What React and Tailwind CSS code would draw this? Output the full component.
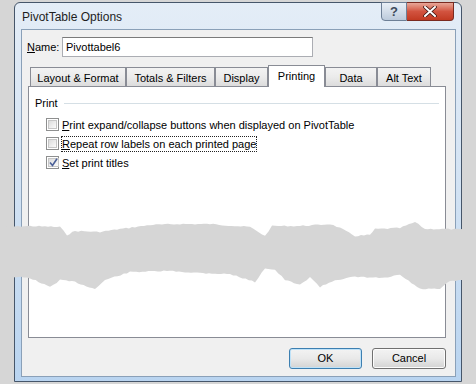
import React from "react";

// jagged "torn paper" band across the dialog
const topEdge = [
  [0, 227], [30, 226], [60, 227], [67, 235], [75, 231], [100, 232], [120, 229],
  [150, 225], [180, 224], [210, 224], [250, 227], [265, 236], [272, 226],
  [300, 226], [330, 224], [340, 228], [355, 236], [370, 235], [375, 229],
  [400, 228], [415, 222], [425, 229], [445, 229], [476, 230],
];
const bottomEdge = [
  [0, 276], [30, 278], [50, 287], [60, 280], [75, 282], [95, 289], [105, 280],
  [130, 272], [170, 271], [200, 273], [230, 274], [255, 282], [265, 268],
  [275, 270], [285, 280], [300, 285], [310, 277], [320, 287], [335, 280],
  [355, 277], [385, 278], [400, 275], [420, 289], [440, 289], [450, 281], [476, 280],
];

const jag = (pts, seed) => {
  let s = seed;
  const rnd = () => {
    s = (s * 9301 + 49297) % 233280;
    return s / 233280;
  };
  const out = [];
  for (let i = 0; i < pts.length - 1; i++) {
    const [x1, y1] = pts[i];
    const [x2, y2] = pts[i + 1];
    const steps = Math.max(1, Math.round((x2 - x1) / 3));
    for (let k = 0; k < steps; k++) {
      const t = k / steps;
      out.push([x1 + (x2 - x1) * t, y1 + (y2 - y1) * t + (rnd() - 0.5) * 1.3]);
    }
  }
  out.push(pts[pts.length - 1]);
  return out;
};

const tornPath = () => {
  const top = jag(topEdge, 7).map(([x, y]) => [x, y - 218]);
  const bot = jag(bottomEdge, 13).map(([x, y]) => [x, y - 218]).reverse();
  const all = [...top, ...bot];
  return "M" + all.map(([x, y]) => `${x.toFixed(1)},${y.toFixed(1)}`).join(" L") + " Z";
};

const Checkbox = ({ checked }) => (
  <span className="w-[13px] h-[13px] border border-[#8e8f8f] bg-white p-px flex shrink-0">
    <span className="flex-1 border border-[#c6c6c6] bg-gradient-to-br from-[#dcdcdc] to-[#fbfbfb] flex items-center justify-center">
      {checked && (
        <svg width="9" height="9" viewBox="0 0 9 9">
          <path d="M1 4.5 L3.5 7.5 L8 0.8" fill="none" stroke="#4a5f97" strokeWidth="1.6" />
        </svg>
      )}
    </span>
  </span>
);

const Tab = ({ label, w, active }) =>
  active ? (
    <div
      className={`${w} h-[22px] -mb-px relative z-10 bg-white border border-b-0 border-[#898c95] flex justify-center pt-[3px] leading-[14px]`}
    >
      {label}
    </div>
  ) : (
    <div
      className={`${w} h-[19px] bg-gradient-to-b from-[#f3f3f3] via-[#ebebeb] to-[#dcdcdc] border border-b-0 border-[#898c95] flex justify-center pt-[3px] leading-[14px]`}
    >
      {label}
    </div>
  );

const App = () => {
  return (
    <div className="w-[476px] h-[384px] bg-[#d6d6d6] relative overflow-hidden font-['Liberation_Sans',Arial,sans-serif] text-[11px] text-black">
      <div className="ml-[14px] mt-[2px] w-[448px] h-[380px] relative border border-[#46566a] rounded-t-[6px] bg-gradient-to-b from-[#e4edf7] via-[#d2e2f3] to-[#b9d4f0] pl-[6px] pr-[5px] flex flex-col">
        {/* title bar */}
        <div className="h-[26px] flex items-center pl-[1px] pt-[1px] text-[12px] text-[#1e1e1e]">PivotTable Options</div>
        <div className="absolute top-[-1px] right-[7px] flex h-[19px]">
          <div className="w-[26px] h-full border border-[#6d7f96] rounded-bl-[4px] bg-gradient-to-b from-[#e9eff6] via-[#d3dde9] to-[#bccadb] flex items-center justify-center text-[13px] font-bold text-[#3e4a5a]">
            ?
          </div>
          <div className="w-[47px] h-full border border-l-0 border-[#7a2a20] rounded-br-[4px] bg-gradient-to-b from-[#e7a698] via-[#d2533f] to-[#c23a22] flex items-center justify-center">
            <svg width="14" height="11" viewBox="0 0 14 11">
              <path d="M2 1 L12 10 M12 1 L2 10" stroke="#3a1410" strokeWidth="3.6" strokeLinecap="round" />
              <path d="M2 1 L12 10 M12 1 L2 10" stroke="#ffffff" strokeWidth="2" strokeLinecap="round" />
            </svg>
          </div>
        </div>

        {/* client area */}
        <div className="h-[348px] border border-[#8aa0b8] bg-[#f0f0f0] flex flex-col">
          <div className="flex items-center mt-[7px] pl-[5px] h-[20px]">
            <span className="w-[35px]">
              <span className="underline">N</span>ame:
            </span>
            <div className="w-[251px] h-[20px] border border-[#abadb3] border-t-[#7a7a7a] bg-white flex items-center pl-[3px]">
              Pivottabel6
            </div>
          </div>

          <div className="flex items-end mt-[8px] ml-[8px] h-[21px]">
            <Tab label="Layout & Format" w="w-[96px]" />
            <Tab label="Totals & Filters" w="w-[89px]" />
            <Tab label="Display" w="w-[53px]" />
            <Tab label="Printing" w="w-[57px]" active />
            <Tab label="Data" w="w-[52px]" />
            <Tab label="Alt Text" w="w-[54px]" />
          </div>

          <div className="ml-[6px] w-[418px] h-[252px] border border-[#898c95] bg-white flex flex-col">
            <div className="flex items-center pt-[10px] pl-[6px] pr-[6px] h-[23px] leading-[13px]">
              <span>Print</span>
              <span className="flex-1 ml-[6px] h-px bg-[#d5dfe5]" />
            </div>
            <div className="mt-[5px] ml-[17px] flex flex-col">
              <div className="h-[19px] flex items-center gap-[2px]">
                <Checkbox />
                <span className="h-[16px] leading-[14px] border border-transparent">
                  <span className="underline">P</span>rint expand/collapse buttons when displayed on PivotTable
                </span>
              </div>
              <div className="h-[19px] flex items-center gap-[2px]">
                <Checkbox />
                <span className="h-[16px] leading-[14px] border border-dotted border-[#222]">
                  <span className="underline">R</span>epeat row labels on each printed page
                </span>
              </div>
              <div className="h-[19px] flex items-center gap-[2px]">
                <Checkbox checked />
                <span className="h-[16px] leading-[14px] border border-transparent">
                  <span className="underline">S</span>et print titles
                </span>
              </div>
            </div>
          </div>

          <div className="flex justify-end gap-[10px] mt-[10px] mr-[9px]">
            <button className="w-[73px] h-[21px] rounded-[3px] border border-[#3c7fb1] shadow-[inset_0_0_0_1px_#bfe2f8] bg-gradient-to-b from-[#f3f3f3] via-[#e9e9e9] to-[#d3d3d3] flex items-center justify-center">
              OK
            </button>
            <button className="w-[74px] h-[21px] rounded-[3px] border border-[#707070] shadow-[inset_0_0_0_1px_#fcfcfc] bg-gradient-to-b from-[#f3f3f3] via-[#e9e9e9] to-[#d3d3d3] flex items-center justify-center">
              Cancel
            </button>
          </div>
        </div>
      </div>

      {/* torn band overlay */}
      <svg className="absolute left-0 top-[218px]" width="476" height="76" viewBox="0 0 476 76">
        <path d={tornPath()} fill="#d6d6d6" />
      </svg>
    </div>
  );
};

export default App;
